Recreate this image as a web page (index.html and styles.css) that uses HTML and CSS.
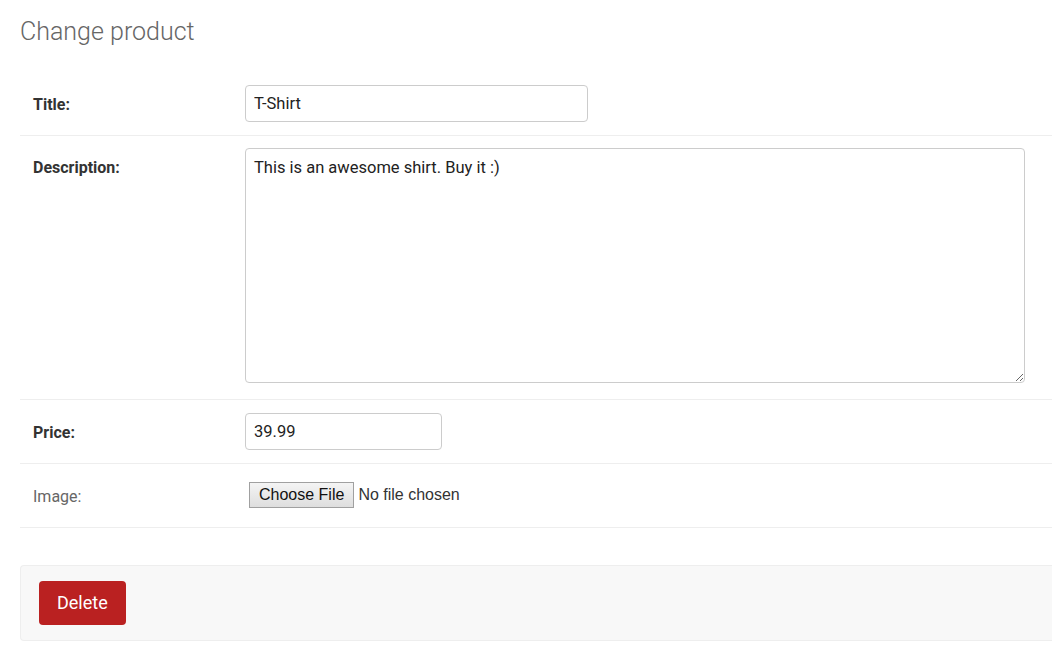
FILE: index.html
```html
<!DOCTYPE html>
<html>
<head>
<meta charset="utf-8">
<title>Change product</title>
<link rel="stylesheet" href="styles.css">
</head>
<body>
<div class="content">
  <h1 class="page-title">Change product</h1>
  <form class="change-form">
    <fieldset class="module">
      <div class="form-row">
        <label class="field-label required" for="id_title">Title:</label>
        <input class="text-input title-input" id="id_title" type="text" value="T-Shirt">
      </div>
      <div class="form-row form-row-tall">
        <label class="field-label required" for="id_description">Description:</label>
        <textarea class="text-area" id="id_description">This is an awesome shirt. Buy it :)</textarea>
      </div>
      <div class="form-row">
        <label class="field-label required" for="id_price">Price:</label>
        <input class="text-input price-input" id="id_price" type="text" value="39.99">
      </div>
      <div class="form-row">
        <label class="field-label optional" for="id_image">Image:</label>
        <div class="file-field">
          <button type="button" class="file-button">Choose File</button>
          <span class="file-status">No file chosen</span>
        </div>
      </div>
    </fieldset>
    <div class="submit-row">
      <a class="delete-link" href="#">Delete</a>
    </div>
  </form>
</div>
</body>
</html>
```

FILE: styles.css
```css
html, body {
  margin: 0;
  padding: 0;
  background: #fff;
  overflow: hidden;
}

body {
  font-family: Roboto, "Liberation Sans", sans-serif;
  color: #333;
}

.content {
  padding: 17px 0 0 20px;
}

.page-title {
  margin: 0 0 25px 0;
  font-size: 25px;
  line-height: 30px;
  font-weight: 300;
  color: #666;
}

.change-form {
  margin: 0;
}

.module {
  margin: 0 0 37px 0;
  padding: 0;
  border: 0;
  min-width: 0;
}

.form-row {
  display: flex;
  align-items: flex-start;
  padding: 13px 0 13px 13px;
  border-bottom: 1px solid #eee;
}

.form-row-tall {
  padding-top: 12px;
  padding-bottom: 16px;
}

.field-label {
  width: 212px;
  flex: none;
  padding-top: 10px;
  font-size: 16px;
  line-height: 20px;
}

.required {
  font-weight: 700;
  color: #333;
}

.optional {
  font-weight: 400;
  color: #666;
}

.text-input,
.text-area {
  box-sizing: border-box;
  margin: 0;
  border: 1px solid #ccc;
  border-radius: 4px;
  font-family: Roboto, "Liberation Sans", sans-serif;
  font-size: 16.5px;
  color: #222;
  background: #fff;
}

.text-input {
  height: 37px;
  padding: 0 8px;
}

.title-input {
  width: 343px;
}

.price-input {
  width: 197px;
}

.text-area {
  display: block;
  width: 780px;
  height: 235px;
  padding: 9px 8px;
  line-height: 19px;
}

.file-field {
  box-sizing: border-box;
  height: 37px;
  display: flex;
  align-items: flex-start;
  padding: 5px 0 0 4px;
}

.file-button {
  box-sizing: border-box;
  height: 26px;
  margin: 0;
  padding: 0 9px;
  border: 1px solid #a0a0a0;
  border-radius: 0;
  background: linear-gradient(#f4f4f4, #dedede);
  font-family: "Liberation Sans", Arial, sans-serif;
  font-size: 16px;
  color: #111;
}

.file-status {
  margin-left: 4px;
  line-height: 26px;
  font-family: "Liberation Sans", Arial, sans-serif;
  font-size: 16px;
  color: #333;
}

.submit-row {
  display: flex;
  padding: 15px 0 15px 18px;
  background: #f8f8f8;
  border: 1px solid #eee;
  border-right: 0;
  border-radius: 4px 0 0 4px;
}

.delete-link {
  display: block;
  height: 44px;
  line-height: 44px;
  padding: 0 18px;
  background: #ba2121;
  border-radius: 4px;
  color: #fff;
  text-decoration: none;
  font-size: 18px;
}
```
